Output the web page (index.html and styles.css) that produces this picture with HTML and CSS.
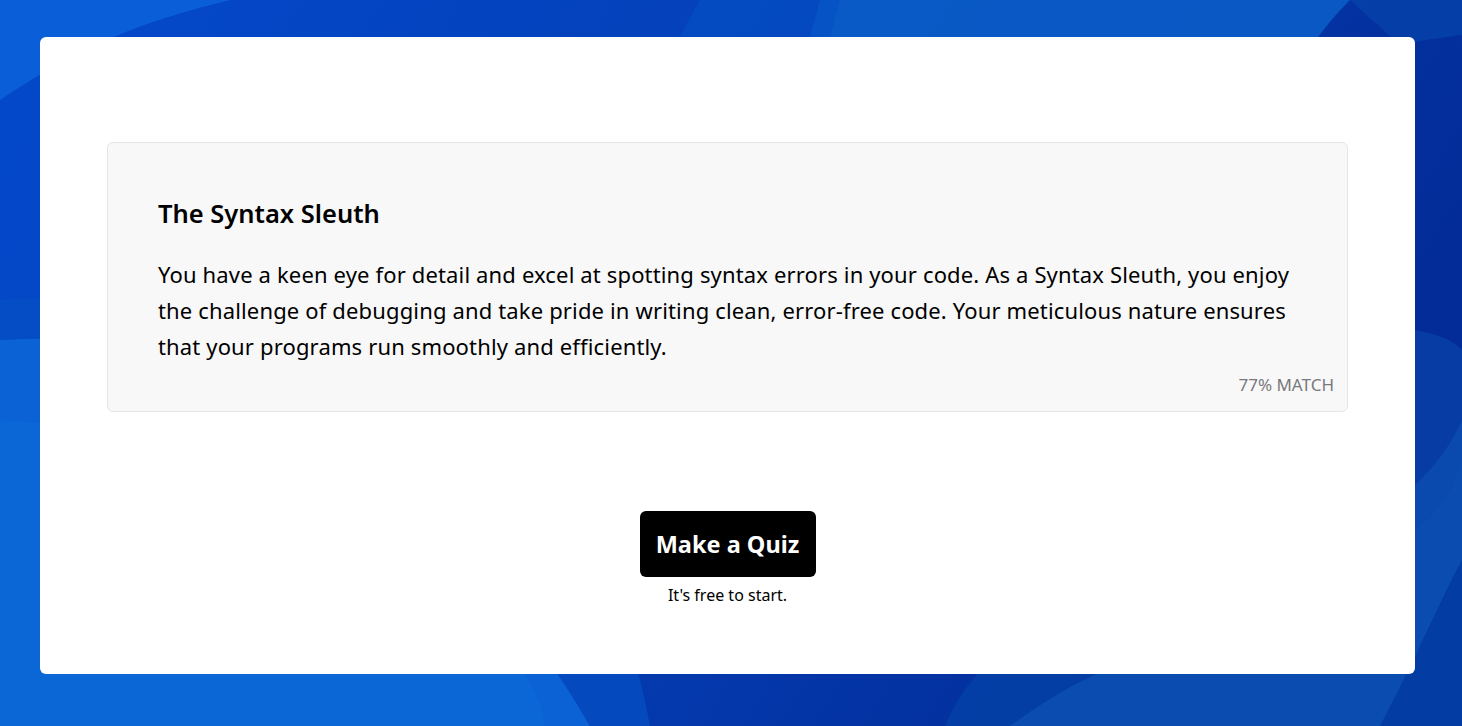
FILE: index.html
```html
<!DOCTYPE html>
<html lang="en">
<head>
<meta charset="utf-8">
<title>The Syntax Sleuth</title>
<link rel="stylesheet" href="styles.css">
</head>
<body>
<svg class="backdrop" viewBox="0 0 1462 726" preserveAspectRatio="none" aria-hidden="true">
  <defs>
    <linearGradient id="base" x1="0" y1="0" x2="1" y2="0.3">
      <stop offset="0" stop-color="#0449cc"/>
      <stop offset="0.5" stop-color="#0440b8"/>
      <stop offset="1" stop-color="#032c98"/>
    </linearGradient>
  </defs>
  <rect width="1462" height="726" fill="url(#base)"/>
  <path d="M0 0 H230 C150 20 90 40 0 100 Z" fill="#0a5fd8"/>
  <path d="M820 0 H1350 C1320 30 1300 60 1280 110 C1150 140 900 160 780 150 Z" fill="#0a5cc8" opacity="0.9"/>
  <path d="M700 0 H840 L800 150 C700 160 640 170 600 180 Z" fill="#0550c4" opacity="0.6"/>
  <path d="M0 340 C150 330 260 380 330 430 C420 520 520 600 590 726 H0 Z" fill="#0a62d4"/>
  <path d="M0 300 C120 290 300 320 380 360 C540 440 620 560 650 726 H590 C520 600 420 520 330 430 C260 380 150 330 0 340 Z" fill="#0650c4" opacity="0.7"/>
  <path d="M0 420 C200 430 360 520 480 620 C520 660 540 690 545 726 H0 Z" fill="#0b66d6"/>
  <path d="M945 726 C960 690 980 670 1000 650 L1462 560 V726 Z" fill="#0444a8" opacity="0.7"/>
  <path d="M1010 726 C1060 690 1110 660 1180 650 C1260 630 1320 580 1350 540 C1400 500 1440 470 1462 420 V560 C1440 600 1420 650 1380 726 Z" fill="#0a4cb0"/>
  <path d="M1415 330 C1440 335 1452 340 1462 350 V460 C1450 500 1430 520 1415 530 Z" fill="#0a48ac" opacity="0.6"/>
  <path d="M1350 0 H1462 V35 C1440 38 1420 40 1400 45 Z" fill="#0842aa" opacity="0.8"/>
</svg>
<div class="page">
  <main class="card">
    <section class="result">
      <h2 class="result-title">The Syntax Sleuth</h2>
      <p class="result-text">You have a keen eye for detail and excel at spotting syntax errors in your code. As a Syntax Sleuth, you enjoy the challenge of debugging and take pride in writing clean, error-free code. Your meticulous nature ensures that your programs run smoothly and efficiently.</p>
      <div class="result-match">77% MATCH</div>
    </section>
    <div class="cta">
      <a class="cta-button" href="#">Make a Quiz</a>
      <div class="cta-note">It's free to start.</div>
    </div>
  </main>
</div>
</body>
</html>
```

FILE: styles.css
```css
* { box-sizing: border-box; }
html, body { margin: 0; height: 100%; }
body {
  font-family: "Noto Sans", "Open Sans", "Liberation Sans", sans-serif;
  color: #000;
  background: #0440b8;
  overflow: hidden;
}
.backdrop {
  position: fixed;
  left: 0;
  top: 0;
  width: 100%;
  height: 100%;
  z-index: 0;
}
.page {
  position: relative;
  z-index: 1;
  height: 100%;
  padding: 37px 47px 52px 40px;
}
.card {
  background: #fff;
  border-radius: 6px;
  height: 637px;
  padding: 105px 67px 0 67px;
  display: flex;
  flex-direction: column;
  align-items: stretch;
}
.result {
  background: #f8f8f8;
  border: 1px solid #e5e5e5;
  border-radius: 6px;
  padding: 53px 50px 15px 50px;
}
.result-title {
  margin: 0 0 26px 0;
  font-size: 25.5px;
  line-height: 34px;
  font-weight: 600;
}
.result-text {
  margin: 0 0 10px 0;
  font-size: 22px;
  line-height: 36px;
  font-weight: 400;
  letter-spacing: 0.15px;
}
.result-match {
  text-align: right;
  margin-right: -37px;
  font-size: 17px;
  line-height: 22px;
  color: #78787e;
}
.cta {
  margin-top: 99px;
  display: flex;
  flex-direction: column;
  align-items: center;
}
.cta-button {
  display: flex;
  align-items: center;
  justify-content: center;
  width: 176px;
  height: 66px;
  background: #000;
  color: #fff;
  border-radius: 6px;
  text-decoration: none;
  font-size: 23.5px;
  font-weight: 700;
}
.cta-note {
  margin-top: 8px;
  font-size: 16px;
  line-height: 20px;
}
```
